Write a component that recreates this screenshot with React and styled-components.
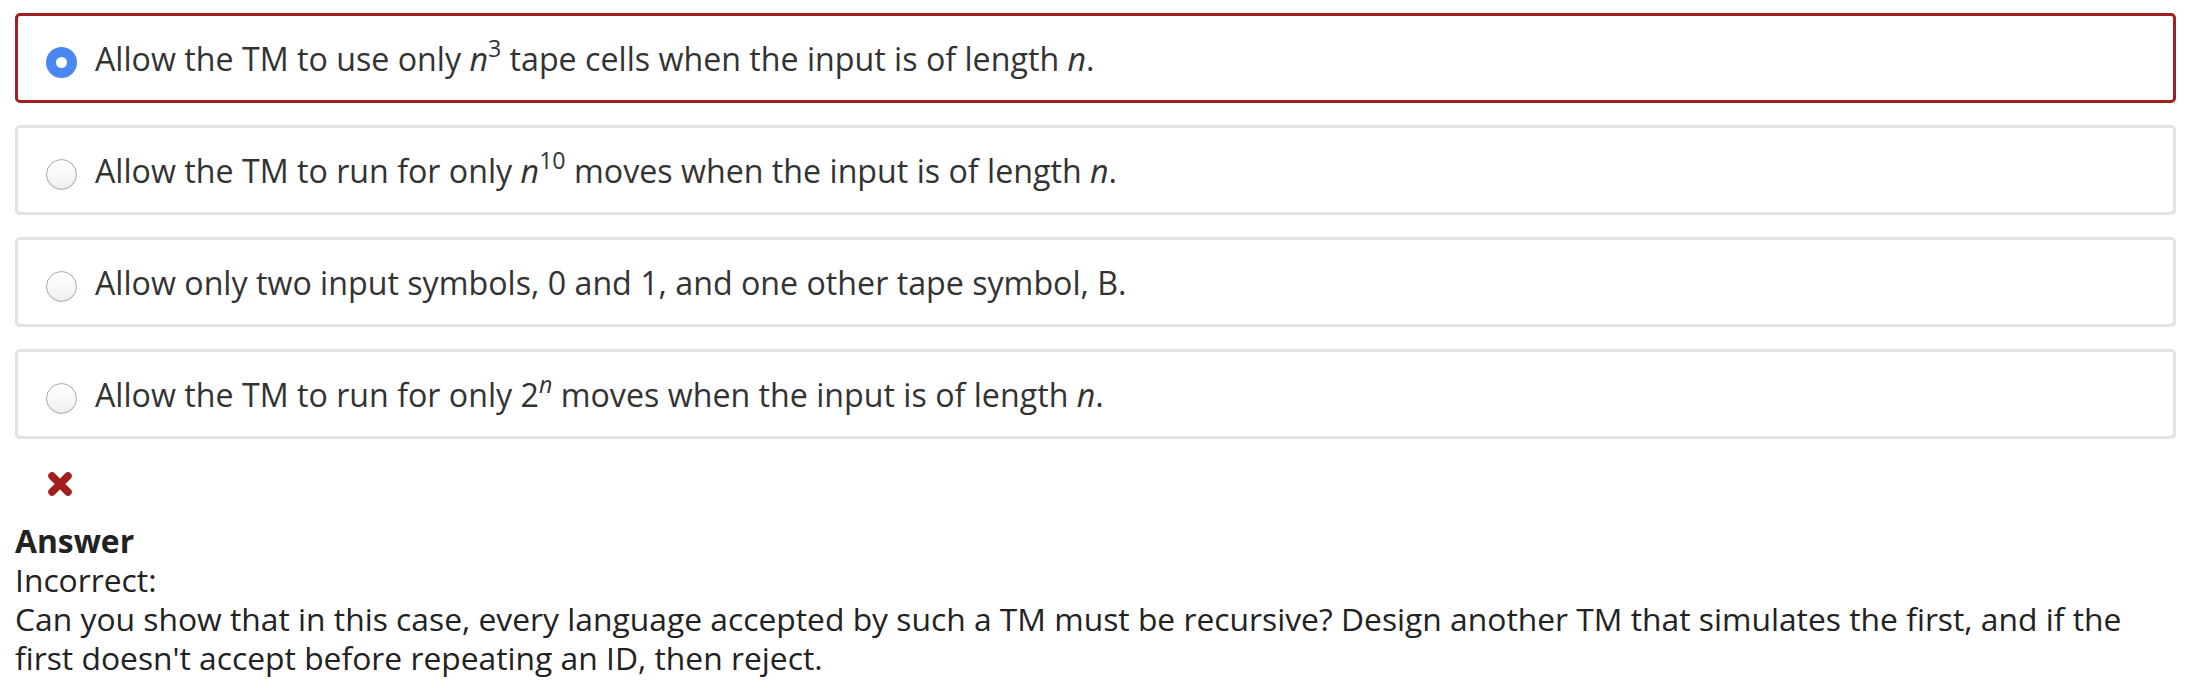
import React from 'react';
import styled, { createGlobalStyle } from 'styled-components';

const GlobalStyle = createGlobalStyle`
  body {
    margin: 0;
    background: #fff;
    font-family: "Open Sans", "Noto Sans", sans-serif;
  }
`;

const Page = styled.div`
  padding: 13px 14px 0 15px;
`;

const OptionList = styled.div`
  display: flex;
  flex-direction: column;
  gap: 22px;
`;

const Option = styled.label`
  box-sizing: border-box;
  height: 90px;
  display: flex;
  align-items: center;
  padding-left: 28px;
  border: ${p => (p.$selected ? '3.5px solid #a41f1f' : '3px solid #e3e3e3')};
  border-radius: 5px;
  color: #333;
  font-size: 32.2px;
`;

const Radio = styled.span`
  box-sizing: border-box;
  flex: none;
  width: 31px;
  height: 31px;
  margin-top: 8px;
  margin-right: 18px;
  border-radius: 50%;
  display: flex;
  align-items: center;
  justify-content: center;
  background: ${p => (p.$checked ? '#4a87f2' : 'linear-gradient(#fff, #f1f1f1)')};
  border: ${p => (p.$checked ? 'none' : '1.5px solid #ababab')};
  box-shadow: ${p => (p.$checked ? 'none' : 'inset 0 -1px 2px rgba(0, 0, 0, 0.08)')};

  &::after {
    content: '';
    display: ${p => (p.$checked ? 'block' : 'none')};
    width: 11px;
    height: 11px;
    border-radius: 50%;
    background: #fff;
  }
`;

const Var = styled.i`
  font-style: italic;
`;

const Sup = styled.sup`
  font-size: 0.72em;
  line-height: 0;
  vertical-align: 0.62em;
`;

const Mark = styled.div`
  padding: 32px 0 0 32px;
  height: 50px;
`;

const Feedback = styled.div`
  color: #222;
  font-size: 31.8px;
  line-height: 39px;
`;

const Heading = styled.div`
  font-weight: 700;
`;

const options = [
  { selected: true, text: <>Allow the TM to use only <Var>n</Var><Sup>3</Sup> tape cells when the input is of length <Var>n</Var>.</> },
  { text: <>Allow the TM to run for only <Var>n</Var><Sup>10</Sup> moves when the input is of length <Var>n</Var>.</> },
  { text: <>Allow only two input symbols, 0 and 1, and one other tape symbol, B.</> },
  { text: <>Allow the TM to run for only 2<Sup><Var>n</Var></Sup> moves when the input is of length <Var>n</Var>.</> },
];

function WrongMark() {
  return (
    <svg width="26" height="26" viewBox="0 0 26 26">
      <path d="M5 5 L21 21 M21 5 L5 21" stroke="#a31f1f" strokeWidth="7.5" strokeLinecap="round" />
    </svg>
  );
}

export default function App() {
  return (
    <Page>
      <GlobalStyle />
      <OptionList>
        {options.map((opt, i) => (
          <Option key={i} $selected={opt.selected}>
            <Radio $checked={opt.selected} />
            <span>{opt.text}</span>
          </Option>
        ))}
      </OptionList>
      <Mark>
        <WrongMark />
      </Mark>
      <Feedback>
        <Heading>Answer</Heading>
        <div>Incorrect:</div>
        <div>
          Can you show that in this case, every language accepted by such a TM must be recursive? Design another TM that simulates the first, and if the first doesn't accept before repeating an ID, then reject.
        </div>
      </Feedback>
    </Page>
  );
}
